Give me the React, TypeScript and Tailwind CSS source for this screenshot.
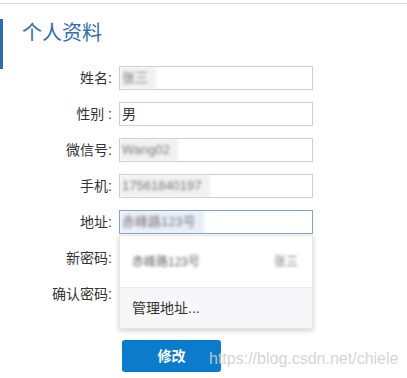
import React from 'react';

const font = { fontFamily: '"Liberation Sans", "Noto Sans CJK SC", sans-serif' };

type Row = { label: string; value?: string; blurred?: boolean; focus?: boolean; hidden?: boolean };

const rows: Row[] = [
  { label: '姓名:', value: '张三', blurred: true },
  { label: '性别 :', value: '男' },
  { label: '微信号:', value: 'Wang02', blurred: true },
  { label: '手机:', value: '17561840197', blurred: true },
  { label: '地址:', value: '赤峰路123号', blurred: true, focus: true },
  { label: '新密码:', hidden: true },
  { label: '确认密码:', hidden: true },
];

function Field({ row }: { row: Row }) {
  const border = row.focus ? 'border-[#7fa2d8]' : 'border-[#cfcfcf]';
  return (
    <div className={`w-[194px] h-[24px] border ${border} bg-white flex items-center overflow-hidden`}>
      {row.value && row.blurred && (
        <span
          className={`h-full flex items-center pl-[2px] pr-[8px] text-[13px] text-[#7a7a7a] blur-[1.4px] ${
            row.focus ? 'bg-[#e8eef8]' : 'bg-[#f1f1f1]'
          }`}
        >
          {row.value}
        </span>
      )}
      {row.value && !row.blurred && <span className="pl-[2px] text-[14px] text-[#333]">{row.value}</span>}
    </div>
  );
}

export default function App() {
  return (
    <div className="relative w-[407px] h-[378px] bg-white overflow-hidden" style={font}>
      <div className="mt-[3px] border-t border-[#dadada]" />

      {/* header */}
      <div className="mt-[15px] h-[50px] border-l-[3px] border-[#2d6cb3] pl-[19px]">
        <h1 className="text-[20px] leading-[28px] text-[#2f6bb1] font-normal">个人资料</h1>
      </div>

      {/* form */}
      <div className="mt-[-3px] flex flex-col gap-[12px]">
        {rows.map((row, i) => (
          <div key={i} className="relative flex items-center h-[24px]">
            <label className="w-[112px] text-right text-[14px] text-[#333]">{row.label}</label>
            <div className="ml-[7px]">{!row.hidden && <Field row={row} />}</div>
            {row.focus && (
              <div className="absolute left-[119px] top-[25px] z-10 w-[194px] bg-white border border-[#e6e6e6] shadow-[0_2px_5px_rgba(0,0,0,0.18)]">
                <div className="h-[52px] flex items-center justify-between px-[12px] border-b border-[#ececec]">
                  <span className="text-[12px] text-[#666] blur-[1.4px]">赤峰路123号</span>
                  <span className="text-[12px] text-[#777] blur-[1.4px] mr-[2px]">张三</span>
                </div>
                <div className="h-[40px] flex items-center px-[12px] bg-[#f7f7f9] text-[14px] text-[#333]">
                  管理地址...
                </div>
              </div>
            )}
          </div>
        ))}
      </div>

      <button className="mt-[34px] ml-[122px] w-[99px] h-[32px] rounded-[3px] bg-[#0b7bcc] text-white text-[14px] font-bold">
        修改
      </button>

      {/* watermark */}
      <div className="absolute left-[209px] top-[347px] whitespace-nowrap text-[16px] text-[#d0d0d0]/90 pointer-events-none">
        https://blog.csdn.net/chiele
      </div>
    </div>
  );
}
